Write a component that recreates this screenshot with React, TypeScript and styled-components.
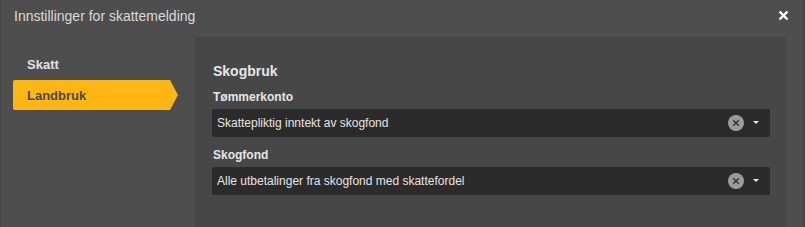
import React from "react";
import styled, { createGlobalStyle } from "styled-components";

const Global = createGlobalStyle`
  html, body {
    margin: 0;
    padding: 0;
    background: #4e4e4e;
    height: 100%;
    overflow: hidden;
  }
  #root { height: 100%; }
  * { box-sizing: border-box; }
`;

const Window = styled.div`
  height: 227px;
  background: #4e4e4e;
  border-left: 1px solid #444444;
  border-right: 2px solid #454545;
  font-family: "Liberation Sans", Arial, sans-serif;
  display: flex;
  flex-direction: column;
  overflow: hidden;
`;

const Header = styled.div`
  height: 32px;
  display: flex;
  align-items: center;
  justify-content: space-between;
  padding: 0 14px 0 13px;
  flex-shrink: 0;
`;

const Title = styled.span`
  font-size: 14px;
  color: #dadada;
  white-space: nowrap;
  margin-top: -1px;
`;

const CloseButton = styled.button`
  border: none;
  background: transparent;
  padding: 0;
  width: 12px;
  height: 12px;
  display: flex;
  align-items: center;
  justify-content: center;
  cursor: pointer;
  margin-top: -1px;
`;

const Body = styled.div`
  display: flex;
  flex: 1;
  min-height: 0;
`;

const Sidebar = styled.nav`
  width: 194px;
  flex-shrink: 0;
  padding: 17px 0 0 12px;
  display: flex;
  flex-direction: column;
  gap: 1px;
`;

const NavItem = styled.div<{ $active?: boolean }>`
  height: 30px;
  width: 165px;
  display: flex;
  align-items: center;
  padding-left: 14px;
  font-size: 13px;
  font-weight: bold;
  color: ${(p) => (p.$active ? "#4a4a4a" : "#e2e2e2")};
  background: ${(p) => (p.$active ? "#fdb614" : "transparent")};
  clip-path: ${(p) =>
    p.$active
      ? "polygon(0 0, 157px 0, 165px 50%, 157px 100%, 0 100%)"
      : "none"};
  border-radius: 2px 0 0 2px;
`;

const Panel = styled.section`
  flex: 1;
  margin: 5px 17px 0 0;
  background: #474747;
  padding: 26px 16px 40px 17px;
  display: flex;
  flex-direction: column;
`;

const Heading = styled.h2`
  margin: 0 0 11px 1px;
  font-size: 14px;
  line-height: 16px;
  font-weight: bold;
  color: #e6e6e6;
`;

const Field = styled.div`
  display: flex;
  flex-direction: column;
  gap: 5px;
  & + & {
    margin-top: 11px;
  }
`;

const Label = styled.label`
  font-size: 12px;
  line-height: 14px;
  font-weight: bold;
  color: #e6e6e6;
  margin-left: 1px;
`;

const SelectBox = styled.div`
  height: 28px;
  background: #2b2b2b;
  border-radius: 2px;
  display: flex;
  align-items: center;
  padding: 0 11px 0 5px;
  color: #e4e4e4;
  font-size: 12px;
`;

const Value = styled.span`
  flex: 1;
  white-space: nowrap;
  overflow: hidden;
`;

const Clear = styled.span`
  width: 16px;
  height: 16px;
  border-radius: 50%;
  background: #9b9b9b;
  display: flex;
  align-items: center;
  justify-content: center;
  margin-right: 9px;
`;

const Caret = styled.span`
  width: 0;
  height: 0;
  border-left: 3px solid transparent;
  border-right: 3px solid transparent;
  border-top: 3px solid #e8e8e8;
  margin-top: -1px;
`;

const Select = ({ value }: { value: string }) => (
  <SelectBox>
    <Value>{value}</Value>
    <Clear>
      <svg width="8" height="8" viewBox="0 0 8 8">
        <path d="M1.2 1.2L6.8 6.8M6.8 1.2L1.2 6.8" stroke="#2e2e2e" strokeWidth="1.4" />
      </svg>
    </Clear>
    <Caret />
  </SelectBox>
);

export default function App() {
  return (
    <>
      <Global />
      <Window>
        <Header>
          <Title>Innstillinger for skattemelding</Title>
          <CloseButton aria-label="Lukk">
            <svg width="11" height="11" viewBox="0 0 11 11">
              <path d="M1.5 1.5L9.5 9.5M9.5 1.5L1.5 9.5" stroke="#ffffff" strokeWidth="2.4" />
            </svg>
          </CloseButton>
        </Header>
        <Body>
          <Sidebar>
            <NavItem>Skatt</NavItem>
            <NavItem $active>Landbruk</NavItem>
          </Sidebar>
          <Panel>
            <Heading>Skogbruk</Heading>
            <Field>
              <Label>Tømmerkonto</Label>
              <Select value="Skattepliktig inntekt av skogfond" />
            </Field>
            <Field>
              <Label>Skogfond</Label>
              <Select value="Alle utbetalinger fra skogfond med skattefordel" />
            </Field>
          </Panel>
        </Body>
      </Window>
    </>
  );
}
